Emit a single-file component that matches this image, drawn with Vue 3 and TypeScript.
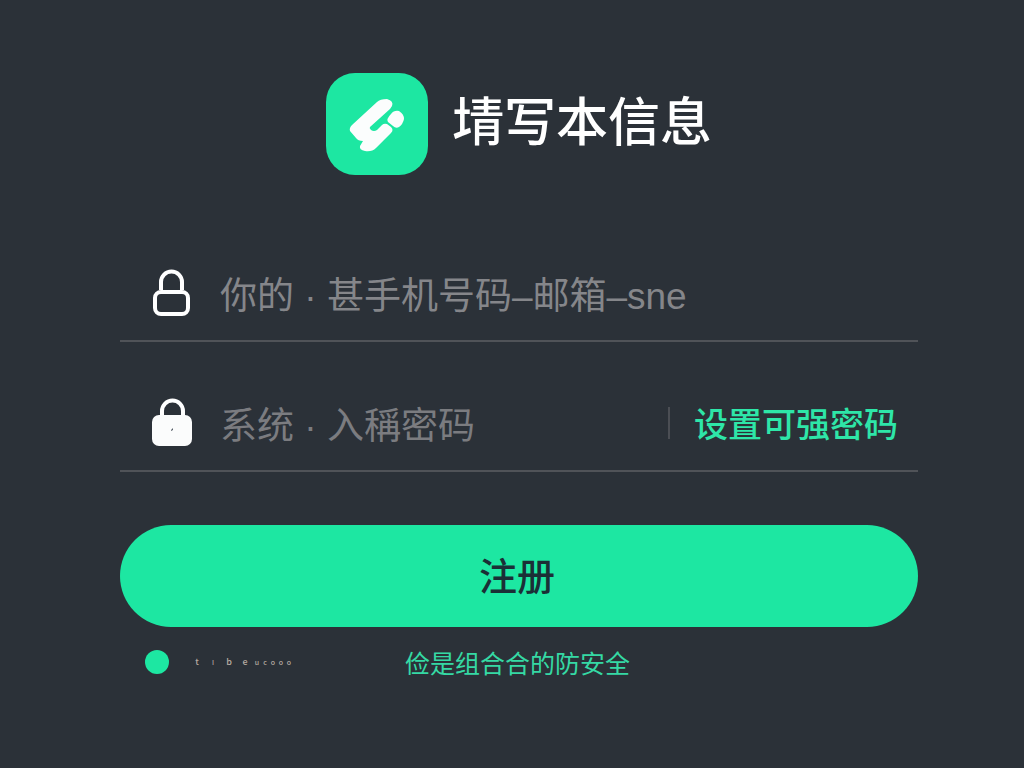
<script setup lang="ts">
import { ref } from 'vue'

const account = ref('')
const password = ref('')
const agreed = ref(true)
const largeMarks: string[] = ['t', 'ı', 'b', 'e']
const smallMarks: string[] = ['u', 'c', 'o', 'o', 'o']
</script>

<template>
  <main class="page">
    <header class="brand">
      <svg class="logo" viewBox="0 0 102 102" aria-hidden="true">
        <rect width="102" height="102" rx="29" fill="#1de7a2" />
        <path
          d="M51 29Q54 26 61 26Q68 28 66 33L64 36L44 54Q43 55 45 57Q48 59 51 57L56 52Q58 50 61 51L65 54Q68 57 65 60L50 75Q46 79 39 78Q33 77 34 73L37 68Q32 68 30 65L24 58Q23 55 26 52Z"
          fill="#fbfdfd"
        />
        <path
          d="M65 41Q68 37 73 38Q78 41 78 46Q77 51 73 54Q70 56 67 53L62 49Q60 46 65 41Z"
          fill="#fbfdfd"
        />
      </svg>
      <h1>埥写本信息</h1>
    </header>

    <form class="form" @submit.prevent>
      <div class="field">
        <label for="account" aria-label="手机号码">
          <svg class="lock" viewBox="0 0 40 50" aria-hidden="true">
            <path d="M9 22V14a10 10 0 0 1 21 0v8" fill="none" stroke="#fff" stroke-width="4" />
            <rect x="3" y="24" width="33" height="22" rx="6" fill="none" stroke="#fff" stroke-width="4" />
          </svg>
        </label>
        <input id="account" v-model="account" type="text" placeholder="你的 · 甚手机号码–邮箱–sne" />
      </div>

      <div class="field second">
        <label for="password" aria-label="密码">
          <svg class="lock" viewBox="0 0 40 50" aria-hidden="true">
            <path d="M10 20V13a10 10 0 0 1 21 0v7" fill="none" stroke="#fff" stroke-width="4" />
            <rect x="0" y="17" width="40" height="31" rx="7" fill="#fbfcfc" />
            <path d="M19 32l2-2v2l-2 1z" fill="#59616a" />
          </svg>
        </label>
        <input id="password" v-model="password" type="password" placeholder="系统 · 入稱密码" />
        <a class="strong" href="#">设置可强密码</a>
      </div>

      <button class="submit" type="submit">注册</button>

      <div class="footer">
        <label class="agree">
          <input v-model="agreed" type="checkbox" />
          <span class="marks">
            <span v-for="(mark, i) in largeMarks" :key="i">{{ mark }}</span>
          </span>
          <span class="marks tiny">
            <span v-for="(mark, i) in smallMarks" :key="i">{{ mark }}</span>
          </span>
        </label>
        <a class="safety" href="#">俭是组合合的防安全</a>
      </div>
    </form>
  </main>
</template>

<style>
body {
  margin: 0;
  background: #2b3138;
}
</style>

<style scoped>
.page {
  box-sizing: border-box;
  min-height: 100vh;
  padding: 73px 106px 40px 120px;
  background: #2b3138;
  font-family: "Noto Sans CJK SC", "Liberation Sans", sans-serif;
}
.brand {
  display: flex;
  align-items: center;
  justify-content: center;
  gap: 24px;
}
.logo {
  width: 102px;
  height: 102px;
}
h1 {
  margin: 0;
  padding-bottom: 10px;
  color: #fff;
  font-size: 52px;
  font-weight: 500;
  line-height: 64px;
}
.form {
  margin-top: 75px;
}
.field {
  display: flex;
  align-items: center;
  box-sizing: border-box;
  height: 92px;
  padding: 0 20px 4px 32px;
  border-bottom: 2px solid #505358;
}
.second {
  margin-top: 38px;
}
.lock {
  display: block;
  width: 40px;
  height: 50px;
}
.field input {
  box-sizing: border-box;
  flex: 1;
  min-width: 0;
  height: 60px;
  margin: 0 0 0 28px;
  padding: 8px 0 0;
  border: 0;
  outline: 0;
  background: transparent;
  color: #fff;
  font-family: "Liberation Sans", "Noto Sans CJK SC", sans-serif;
  font-size: 37px;
}
.field input::placeholder {
  color: #85868a;
  opacity: 1;
}
.second input::placeholder {
  color: #7b7c80;
}
.strong {
  padding-left: 24px;
  border-left: 2px solid #4b4e54;
  color: #2ee6a8;
  font-size: 34px;
  font-weight: 500;
  line-height: 32px;
  text-decoration: none;
}
.submit {
  display: block;
  width: 100%;
  height: 102px;
  margin-top: 53px;
  padding: 0 4px 6px 0;
  border: 0;
  border-radius: 51px;
  background: #1de7a2;
  color: #1b2f36;
  font-family: inherit;
  font-size: 38px;
  font-weight: 500;
}
.footer {
  display: flex;
  align-items: center;
  height: 70px;
  padding-left: 25px;
}
.agree {
  display: flex;
  align-items: center;
  width: 260px;
}
.agree input {
  appearance: none;
  width: 24px;
  height: 24px;
  margin: 0 20px 0 0;
  border-radius: 50%;
  background: #1de7a2;
}
.marks {
  display: grid;
  grid-auto-flow: column;
  grid-auto-columns: 16px;
  color: #b5aaa0;
  font-size: 9px;
  font-weight: 500;
  line-height: 16px;
  text-align: center;
}
.tiny {
  grid-auto-columns: 8px;
  font-size: 7px;
}
.safety {
  color: #35d9a4;
  font-size: 25px;
  line-height: 36px;
  text-decoration: none;
}
</style>
